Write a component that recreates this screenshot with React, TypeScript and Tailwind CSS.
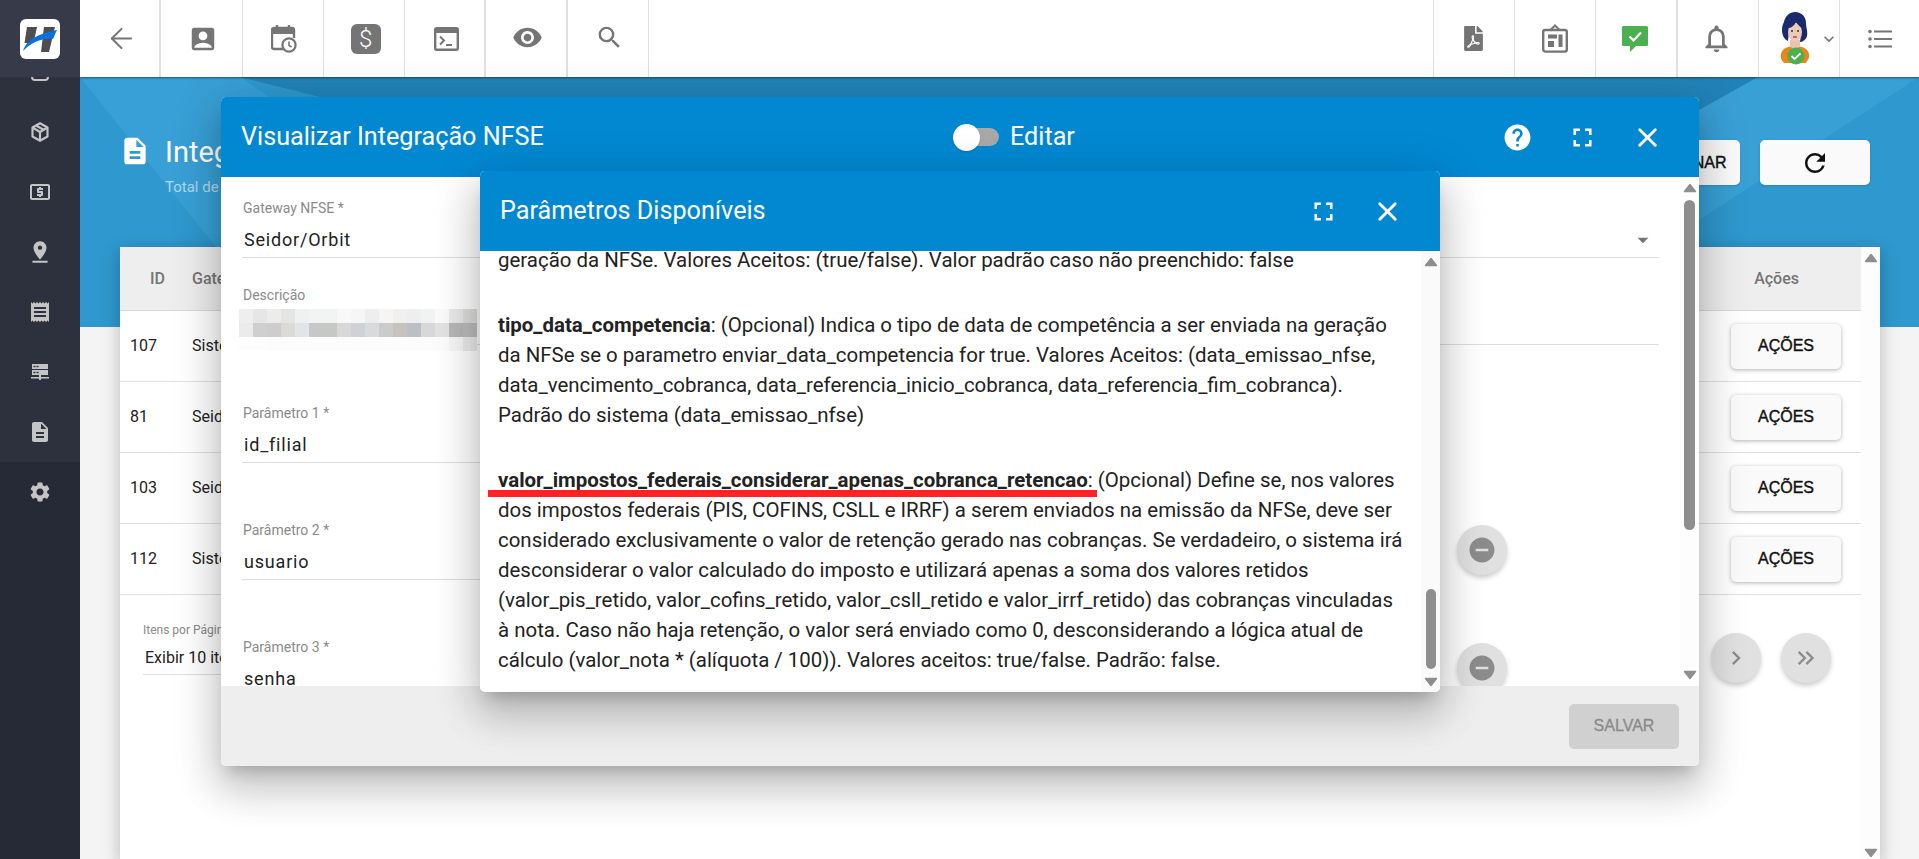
import React from "react";
import { ArrowLeft, X } from "lucide-react";
import { FaFilePdf } from "react-icons/fa";
import {
  MdAccountBox, MdVisibility, MdSearch, MdNotificationsNone, MdExpandMore, MdHelp, MdFullscreen,
  MdRefresh, MdDescription, MdRemoveCircle, MdChevronRight, MdKeyboardDoubleArrowRight,
  MdLocalAtm, MdPinDrop, MdReceipt, MdSettings, MdArrowDropDown,
} from "react-icons/md";

const Up = () => (
  <svg width="14" height="10" viewBox="0 0 14 10" className="shrink-0"><path d="M7 1.5 L12.5 8.500 L1.500 8.500 Z" fill="#8e8e8e" stroke="#8e8e8e" strokeWidth="1.5" strokeLinejoin="round" /></svg>
);
const Down = () => (
  <svg width="14" height="10" viewBox="0 0 14 10" className="shrink-0"><path d="M1.500 1.500 L12.500 1.500 L7 8.500 Z" fill="#8e8e8e" stroke="#8e8e8e" strokeWidth="1.5" strokeLinejoin="round" /></svg>
);

const Logo = () => (
  <svg viewBox="0 0 40 40" className="w-10 h-10 rounded-md bg-white">
    <path d="M7 8H17L13.500 24H4.500Z" fill="#4d4d52" />
    <path d="M24 8H35L29 33H21Z" fill="#4d4d52" />
    <path d="M3 32 C6 22 16 15 37 11 C35 15 34 18 33 20 C22 19 12 23 3 32Z" fill="#0a6fe0" />
  </svg>
);

const CalendarClock = () => (
  <svg width="26" height="28" viewBox="0 0 26 28" fill="none">
    <path d="M3 3h18a2 2 0 0 1 2 2v8M12 24H3a2 2 0 0 1-2-2V5a2 2 0 0 1 2-2" stroke="#757575" strokeWidth="2.4" />
    <path d="M2 3h20v6H2z" fill="#757575" />
    <path d="M6 0v4M18 0v4" stroke="#757575" strokeWidth="2.4" />
    <circle cx="18" cy="20" r="6.6" fill="#fff" stroke="#757575" strokeWidth="2.2" />
    <path d="M18 16.5V20.5L20.6 22" stroke="#757575" strokeWidth="1.6" />
  </svg>
);
const Terminal = () => (
  <svg width="25" height="24" viewBox="0 0 25 24" fill="none">
    <rect x="1.2" y="1.2" width="22.6" height="21.6" rx="1.5" stroke="#757575" strokeWidth="2.4" />
    <path d="M1.2 2h22.6v4H1.2z" fill="#757575" />
    <path d="M6 9.5l4 4-4 4" stroke="#757575" strokeWidth="2" />
    <path d="M12 18h6" stroke="#757575" strokeWidth="2" />
  </svg>
);
const Board = () => (
  <svg width="26" height="29" viewBox="0 0 26 29" fill="none">
    <path d="M8.5 6 L13 1.5 L17.5 6" stroke="#757575" strokeWidth="2" />
    <rect x="1.2" y="6" width="23.6" height="21.6" rx="2" stroke="#757575" strokeWidth="2.4" />
    <path d="M6 10.5h9v4H6zM6 17h6v6H6zM16.5 10.5h4v12.5h-4z" fill="#757575" />
  </svg>
);
const ChatCheck = () => (
  <svg width="26" height="26" viewBox="0 0 26 26">
    <path d="M1.5 0h23A1.5 1.5 0 0 1 26 1.5v17a1.5 1.5 0 0 1-1.5 1.5H14l-6 6v-6H1.5A1.5 1.5 0 0 1 0 18.500v-17A1.5 1.5 0 0 1 1.500 0z" fill="#4caf50" />
    <path d="M7.500 10.500l4 4 7.500-8" stroke="#fff" strokeWidth="2.2" fill="none" />
  </svg>
);
const ListIcon = () => (
  <svg width="24" height="20" viewBox="0 0 24 20" fill="#757575">
    <circle cx="2" cy="2.500" r="1.800" /><circle cx="2" cy="10" r="1.800" /><circle cx="2" cy="17.500" r="1.800" />
    <rect x="6" y="1.500" width="18" height="2" /><rect x="6" y="9" width="18" height="2" /><rect x="6" y="16.500" width="18" height="2" />
  </svg>
);
const Avatar = () => (
  <svg width="36" height="54" viewBox="0 0 36 54" className="shrink-0">
    <path d="M4 42c1-6 8-8 14-8s13 2 14 8c1 4-2 7-3 9H7c-2-2-4-5-3-9z" fill="#e8871a" />
    <path d="M13 28h10v6l-5 5-5-5z" fill="#ecc3ae" />
    <path d="M18 0c7 0 11 5 11 11 0 5 2 8 1 13-1 4-5 6-7 6l1-8-12-2-1 9c-4-2-6-6-6-11 0-4 1-6 2-8 1-6 6-10 11-10z" fill="#1a2a6c" />
    <ellipse cx="18" cy="20" rx="7" ry="9.500" fill="#eccab6" />
    <path d="M11 16c3 0 6-2 8-6 2 3 4 5 6 6 0-6-3-9-7-9s-7 3-7 9z" fill="#1a2a6c" />
    <circle cx="15" cy="19" r="1" fill="#333" /><circle cx="21" cy="19" r="1" fill="#333" />
    <path d="M16 25h4" stroke="#b53a5a" strokeWidth="1.400" />
    <circle cx="19" cy="44" r="8.500" fill="#4caf50" />
    <path d="M14.500 44l3 3 6-5.500" stroke="#fff" strokeWidth="1.800" fill="none" />
  </svg>
);
const CubeIcon = () => (
  <svg width="18" height="20" viewBox="0 0 18 20" fill="none" stroke="#c4c4c4" strokeWidth="2.200" strokeLinejoin="round">
    <path d="M9 1.300 L16.500 5.500 V14.500 L9 18.700 L1.500 14.500 V5.500 Z" />
    <path d="M1.500 5.500 L9 10 L16.500 5.500 M9 10 V18.700 M5 3.500 L12.500 7.700" />
  </svg>
);
const ServerIcon = () => (
  <svg width="18" height="16" viewBox="0 0 18 16" fill="#c4c4c4">
    <path d="M1 0h16v5H1zM1 6h16v5H1zM8 11h2v2h8v1.500H10V16H8v-1.500H0V13h8z" />
    <rect x="2.500" y="1.800" width="2" height="1.400" fill="#2d303d" /><rect x="5.500" y="1.800" width="2" height="1.400" fill="#2d303d" />
    <rect x="2.500" y="7.800" width="2" height="1.400" fill="#2d303d" /><rect x="5.500" y="7.800" width="2" height="1.400" fill="#2d303d" />
  </svg>
);

const Cell = ({ children, className = "" }: { children: React.ReactNode; className?: string }) => (
  <div className={"w-[81.3px] h-full flex items-center justify-center shrink-0 box-border " + className}>{children}</div>
);

const SideItem = ({ children }: { children: React.ReactNode }) => (
  <div className="h-[60px] flex items-center justify-center text-[#c4c4c4]">{children}</div>
);

const blur = [
  ["#eeeeee","#e6e6e6","#ececec","#e4e4e2","#eef0f1","#f2f3f3","#f2f4f4","#f8f8f8","#f6f6f6","#eeeeee","#f5f5f5","#f2f0ee","#eceef0","#f2f2f2","#fafafa","#e9e9e9","#dddddb"],
  ["#ebebeb","#cfcfcf","#cdcdcd","#dcdad5","#e1e5e8","#c7c7c7","#c7c7c6","#d8d8d8","#ced1d5","#d8dadb","#cacbcb","#c8c2bc","#bcc0c6","#d8d8d8","#e2e2e2","#b8b8b8","#bcbcbc"],
  ["#fdfdfd","#fdfdfd","#fcfcfc","#fcfcfc","#fcfcfc","#fcfcfc","#fcfcfc","#fcfcfc","#fcfcfc","#fcfcfc","#fcfcfc","#fcfcfc","#fcfcfc","#fcfcfc","#fcfcfc","#f6f6f6","#ebebeb"],
];

const Label = ({ children }: { children: React.ReactNode }) => (
  <div className="h-5 leading-5 text-[14px] text-[#8a8a8a] pl-px">{children}</div>
);
const Value = ({ children, extra }: { children: React.ReactNode; extra?: React.ReactNode }) => (
  <div className="h-10 pt-1 border-b border-[#dedede] flex items-center justify-between pl-0.5 text-[18px] tracking-[0.8px] text-[#222] box-border">
    <span>{children}</span>{extra}
  </div>
);
const Minus = () => (
  <div className="w-[50px] h-[50px] rounded-full bg-[#e0e0e0] shadow-[0_3px_5px_rgba(0,0,0,0.2)] flex items-center justify-center shrink-0">
    <MdRemoveCircle size={30} color="#8c8c8c" />
  </div>
);

const rows = [["107", "Sistema"], ["81", "Seidor/Orbit"], ["103", "Seidor/Orbit"], ["112", "Sistema"]];

export default function App() {
  return (
    <div className="relative w-full h-screen flex overflow-hidden bg-[#f4f4f4] font-['Roboto',sans-serif]">
      {/* Sidebar */}
      <aside className="w-20 shrink-0 h-full flex flex-col bg-[#262a36] z-20">
        <div className="h-[77px] shrink-0 bg-[#363a49] flex items-center justify-center">
          <Logo />
        </div>
        <div className="flex-1 overflow-hidden">
          <div className="-mt-[35px] bg-[#2d303d]">
            <SideItem><div className="w-[18px] h-[18px] border-2 border-[#c4c4c4] rounded-sm" /></SideItem>
            <SideItem><CubeIcon /></SideItem>
            <SideItem><MdLocalAtm size={24} /></SideItem>
            <SideItem><MdPinDrop size={26} /></SideItem>
            <SideItem><MdReceipt size={24} /></SideItem>
            <SideItem><ServerIcon /></SideItem>
            <SideItem><MdDescription size={24} /></SideItem>
          </div>
          <SideItem><MdSettings size={24} /></SideItem>
        </div>
      </aside>

      {/* Main */}
      <div className="flex-1 min-w-0 h-full flex flex-col">
        <header className="h-[77px] shrink-0 bg-white flex items-stretch z-10 shadow-[0_1px_2px_rgba(0,40,70,0.6)]">
          <Cell className="border-r-2 border-[#e0e0e0] pl-[4px]"><ArrowLeft size={33} strokeWidth={1.500} color="#757575" /></Cell>
          <Cell className="border-r border-[#e0e0e0] pl-[3px]"><MdAccountBox size={30} color="#757575" /></Cell>
          <Cell className="border-r border-[#e0e0e0] pl-[3px]"><CalendarClock /></Cell>
          <Cell className="border-r border-[#e0e0e0] pl-[3px]">
            <div className="w-[30px] h-[30px] rounded-[6px] bg-[#757575] flex items-center justify-center text-white text-[24px] font-light leading-none">$</div>
          </Cell>
          <Cell className="border-r-2 border-[#e0e0e0] pl-[3px]"><Terminal /></Cell>
          <Cell className="border-r-2 border-[#e0e0e0] pl-[3px]"><MdVisibility size={31} color="#757575" className="-mt-0.5" /></Cell>
          <Cell className="border-r border-[#e0e0e0] pl-[3px]"><MdSearch size={29} color="#757575" className="-mt-0.5" /></Cell>
          <div className="flex-1" />
          <Cell className="border-l border-[#e0e0e0]"><FaFilePdf size={25} color="#757575" /></Cell>
          <Cell className="border-l border-[#e0e0e0]"><Board /></Cell>
          <Cell className="border-l border-[#e0e0e0] pr-[2px]"><ChatCheck /></Cell>
          <Cell className="border-l-2 border-[#e0e0e0] pr-[4px]"><MdNotificationsNone size={33} color="#757575" /></Cell>
          <Cell className="border-l border-[#e0e0e0] !justify-start pl-[18px] gap-[6px]"><Avatar /><MdExpandMore size={20} color="#757575" /></Cell>
          <div className="w-20 h-full shrink-0 flex items-center justify-center border-l border-[#e0e0e0]"><ListIcon /></div>
        </header>

        <main className="relative flex-1 min-h-0 flex flex-col overflow-hidden">
          {/* Decorative blue band */}
          <svg className="absolute left-0 top-0 w-full h-[250px]" viewBox="0 0 1839 250" preserveAspectRatio="none">
            <rect width="1839" height="250" fill="#2f98ce" />
            <path d="M0 0H160L400 165L200 250Z" fill="#38a0d6" />
            <path d="M160 0H1678L1500 110H600Z" fill="#2283b8" />
            <path d="M1678 0H1839L1619 143V33Z" fill="#39a0d5" />
          </svg>

          <div className="relative shrink-0 h-[45px] mt-[63px] pl-[41px] pr-[49px] flex items-start justify-between">
            <div className="flex items-start gap-[14px] -mt-[6px] text-white">
              <MdDescription size={32} className="-ml-[2px] mt-[1px]" />
              <div>
                <div className="text-[29px] leading-[36px]">Integrações NFSE</div>
                <div className="text-[15px] leading-[18px] mt-[8px] text-white/60">Total de registros: 4</div>
              </div>
            </div>
            <div className="flex gap-5">
              <button className="h-[45px] w-[116px] rounded-[5px] bg-[#fafafa] shadow-sm text-[16px] text-[#111] font-['Liberation_Sans',sans-serif] [-webkit-text-stroke:0.4px]">ADICIONAR</button>
              <button className="h-[45px] w-[110px] rounded-[5px] bg-[#fafafa] shadow-sm flex items-center justify-center text-[#111]"><MdRefresh size={30} /></button>
            </div>
          </div>

          {/* Card */}
          <section className="relative flex-1 min-h-0 mt-[62px] ml-10 mr-[39px] bg-white flex shadow-[0_4px_16px_rgba(0,0,0,0.25)]">
            <div className="flex-1 min-w-0">
              <div className="h-16 bg-[#eeeeee] border-b border-[#d8d8d8] flex items-center text-[16px] font-medium text-[#757575]">
                <div className="w-[72px] pl-[30px]">ID</div>
                <div className="flex-1">Gateway</div>
                <div className="pr-[62px]">Ações</div>
              </div>
              {rows.map(([id, g]) => (
                <div key={id} className="h-[71px] border-b border-[#e0e0e0] flex items-center text-[16px] text-[#222]">
                  <div className="w-[72px] pl-2.5">{id}</div>
                  <div className="flex-1">{g}</div>
                  <button className="w-[110px] h-[45px] mr-5 rounded-[5px] bg-[#fafafa] shadow-[0_1px_4px_rgba(0,0,0,0.3)] text-[16px] text-[#111] font-['Liberation_Sans',sans-serif] [-webkit-text-stroke:0.4px]">AÇÕES</button>
                </div>
              ))}
              <div className="flex justify-between items-start">
                <div className="pl-[23px] pt-[28px] w-[300px]">
                  <div className="text-[12px] leading-[14px] text-[#8a8a8a]">Itens por Página</div>
                  <div className="mt-[9px] h-[29px] border-b border-[#dedede] pl-0.5 text-[16px] leading-[24px] text-[#222]">Exibir 10 itens</div>
                </div>
                <div className="flex gap-5 pt-[38px] pr-[30px]">
                  <div className="w-[50px] h-[50px] rounded-full bg-[#e0e0e0] shadow-[0_3px_5px_rgba(0,0,0,0.2)] flex items-center justify-center"><MdChevronRight size={28} color="#8c8c8c" /></div>
                  <div className="w-[50px] h-[50px] rounded-full bg-[#e0e0e0] shadow-[0_3px_5px_rgba(0,0,0,0.2)] flex items-center justify-center"><MdKeyboardDoubleArrowRight size={28} color="#8c8c8c" /></div>
                </div>
              </div>
            </div>
            <div className="w-[19px] shrink-0 flex flex-col items-center justify-between pt-[6px] pb-[1px] bg-[#fdfdfd]">
              <Up /><Down />
            </div>
          </section>
        </main>
      </div>

      {/* Modal 1 */}
      <div className="absolute left-[221px] top-[97px] w-[1478px] h-[669px] z-30 rounded-[5px] overflow-hidden flex flex-col bg-white shadow-[0_11px_15px_-7px_rgba(0,0,0,0.2),0_24px_38px_3px_rgba(0,0,0,0.14),0_9px_46px_8px_rgba(0,0,0,0.12)]">
        <div className="h-20 shrink-0 bg-[#0288d1] flex items-center text-white pl-5">
          <div className="w-[712px] text-[25.2px]">Visualizar Integração NFSE</div>
          <div className="relative w-[46px] h-[27px] flex items-center">
            <div className="ml-[5px] w-[41px] h-[18px] rounded-full bg-[#a8a8a8]" />
            <div className="absolute left-0 top-0 w-[27px] h-[27px] rounded-full bg-white shadow" />
          </div>
          <div className="ml-[11px] text-[25.2px]">Editar</div>
          <div className="flex-1" />
          <div className="flex items-center pr-[19px]">
            <div className="w-[65px] flex justify-center"><MdHelp size={31} /></div>
            <div className="w-[65px] flex justify-center"><MdFullscreen size={31} /></div>
            <div className="w-[65px] flex justify-center"><X size={31} strokeWidth={2.200} /></div>
          </div>
        </div>
        <div className="flex-1 min-h-0 flex bg-white">
          <div className="flex-1 min-w-0 overflow-hidden pl-[21px] pr-[21px]">
            <div className="mt-[21px]">
              <Label>Gateway NFSE *</Label>
              <Value extra={<MdArrowDropDown size={26} color="#757575" className="mr-[3px]" />}>Seidor/Orbit</Value>
            </div>
            <div className="relative mt-[27px]">
              <Label>Descrição</Label>
              <div className="h-10 border-b border-[#dedede]" />
              <div className="absolute -left-[3px] top-[24px] flex flex-col">
                {blur.map((r, i) => (
                  <div key={i} className="flex h-[14px]">
                    {r.map((c, j) => <div key={j} className="w-[14px] h-full" style={{ background: c }} />)}
                  </div>
                ))}
              </div>
            </div>
            <div className="mt-[58px] w-[1198px]">
              <Label>Parâmetro 1 *</Label>
              <Value>id_filial</Value>
            </div>
            <div className="mt-[57px] flex items-start gap-[17px]">
              <div className="w-[1198px] shrink-0">
                <Label>Parâmetro 2 *</Label>
                <Value>usuario</Value>
              </div>
              <div className="mt-[5px]"><Minus /></div>
            </div>
            <div className="mt-[57px] flex items-start gap-[17px]">
              <div className="w-[1198px] shrink-0">
                <Label>Parâmetro 3 *</Label>
                <Value>senha</Value>
              </div>
              <div className="mt-[6px]"><Minus /></div>
            </div>
          </div>
          <div className="w-[19px] shrink-0 flex flex-col items-center pt-[6px] pb-[6px] bg-[#fdfdfd]">
            <Up />
            <div className="w-[11px] h-[330px] mt-[7px] rounded-full bg-[#8e8e8e]" />
            <div className="flex-1" />
            <Down />
          </div>
        </div>
        <div className="h-20 shrink-0 bg-[#eeeeee] flex items-center justify-end pr-5">
          <button className="w-[110px] h-[45px] rounded-[5px] bg-[#d0d0d0] text-[16px] text-[#8a8a8a] font-['Liberation_Sans',sans-serif] [-webkit-text-stroke:0.3px]">SALVAR</button>
        </div>
      </div>

      {/* Modal 2 */}
      <div className="absolute left-[480px] top-[171px] w-[960px] h-[521px] z-40 rounded-[5px] overflow-hidden flex flex-col bg-white shadow-[0_11px_15px_-7px_rgba(0,0,0,0.2),0_24px_38px_3px_rgba(0,0,0,0.14),0_9px_46px_8px_rgba(0,0,0,0.12)]">
        <div className="h-20 shrink-0 bg-[#0288d1] flex items-center text-white pl-5">
          <div className="flex-1 text-[25.2px]">Parâmetros Disponíveis</div>
          <div className="flex items-center pr-[21px]">
            <div className="w-16 flex justify-center"><MdFullscreen size={31} /></div>
            <div className="w-16 flex justify-center"><X size={31} strokeWidth={2.200} /></div>
          </div>
        </div>
        <div className="flex-1 min-h-0 flex">
          <div className="flex-1 min-w-0 overflow-hidden pl-[18px] pr-[8px] text-[20.45px] leading-[30px] text-[#222]">
            <div className="-mt-[6.5px]">
              <p className="mb-[35px]">geração da NFSe. Valores Aceitos: (true/false). Valor padrão caso não preenchido: false</p>
              <p className="mb-[35px]"><b className="font-bold">tipo_data_competencia</b>: (Opcional) Indica o tipo de data de competência a ser enviada na geração<br />da NFSe se o parametro enviar_data_competencia for true. Valores Aceitos: (data_emissao_nfse,<br />data_vencimento_cobranca, data_referencia_inicio_cobranca, data_referencia_fim_cobranca).<br />Padrão do sistema (data_emissao_nfse)</p>
              <p><b className="font-bold">valor_impostos_federais_considerar_apenas_cobranca_retencao</b>: (Opcional) Define se, nos valores<br />dos impostos federais (PIS, COFINS, CSLL e IRRF) a serem enviados na emissão da NFSe, deve ser<br />considerado exclusivamente o valor de retenção gerado nas cobranças. Se verdadeiro, o sistema irá<br />desconsiderar o valor calculado do imposto e utilizará apenas a soma dos valores retidos<br />(valor_pis_retido, valor_cofins_retido, valor_csll_retido e valor_irrf_retido) das cobranças vinculadas<br />à nota. Caso não haja retenção, o valor será enviado como 0, desconsiderando a lógica atual de<br />cálculo (valor_nota * (alíquota / 100)). Valores aceitos: true/false. Padrão: false.</p>
            </div>
          </div>
          <div className="w-[19px] shrink-0 flex flex-col items-center pt-[6px] pb-[5px] bg-[#fafafa]">
            <Up />
            <div className="flex-1" />
            <div className="w-[10px] h-20 mb-2 rounded-full bg-[#8e8e8e]" />
            <Down />
          </div>
        </div>
        <div className="absolute left-2 top-[319px] w-[609px] h-[7px] bg-[#ff2323]" />
      </div>
    </div>
  );
}
